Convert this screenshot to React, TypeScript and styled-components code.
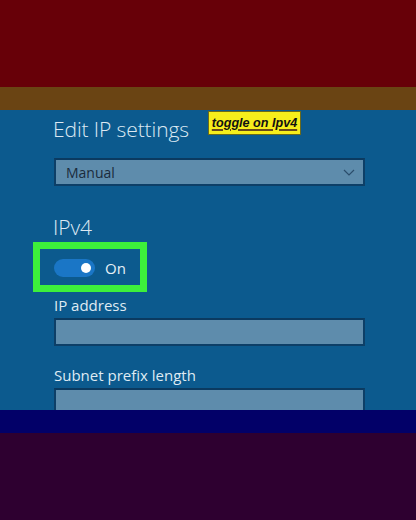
import React from "react";
import styled, { createGlobalStyle } from "styled-components";

const Global = createGlobalStyle`
  html, body { margin: 0; padding: 0; background: #2e0030; }
  body { font-family: "Open Sans", "Noto Sans", sans-serif; }
`;

const Page = styled.div`
  width: 416px;
  height: 520px;
  display: flex;
  flex-direction: column;
  overflow: hidden;
`;

const Band = styled.div<{ $h: number; $bg: string }>`
  height: ${(p) => p.$h}px;
  background: ${(p) => p.$bg};
  flex: none;
`;

const Panel = styled.section`
  position: relative;
  height: 300px;
  flex: none;
  background: #0c5a8e;
  padding: 5px 0 0 54px;
  box-sizing: border-box;
  overflow: hidden;
  display: flex;
  flex-direction: column;
  color: #e0ebf4;
`;

const Heading = styled.h2<{ $mt?: number }>`
  margin: ${(p) => p.$mt ?? 0}px 0 0 -1px;
  font-size: 21px;
  line-height: 28px;
  font-weight: 300;
  letter-spacing: -0.1px;
  color: #dde9f3;
`;

const Sticker = styled.div`
  position: absolute;
  left: 208px;
  top: 1px;
  width: 93px;
  height: 24px;
  box-sizing: border-box;
  background: #f6ee1b;
  border: 1px solid #6b6a1c;
  display: flex;
  align-items: center;
  justify-content: center;
  white-space: nowrap;
  font-family: "Liberation Sans", Arial, sans-serif;
  font-style: italic;
  font-weight: 700;
  font-size: 12.6px;
  color: #111;
  text-decoration: underline;
  text-decoration-color: #6a4a1a;
  text-decoration-thickness: 1.5px;
  text-underline-offset: 2px;
`;

const Field = styled.div<{ $mt: number }>`
  margin-top: ${(p) => p.$mt}px;
  width: 311px;
  height: 28px;
  box-sizing: border-box;
  background: #5e8cac;
  border: 2px solid #0d3f67;
  border-top-color: #0b3a60;
  display: flex;
  align-items: center;
  justify-content: space-between;
  padding: 0 8px 0 10px;
  flex: none;
`;

const FieldText = styled.span`
  font-size: 14px;
  color: #1a2b3c;
`;

const Label = styled.div<{ $mt: number }>`
  margin-top: ${(p) => p.$mt}px;
  font-size: 15px;
  line-height: 20px;
  color: #dfeaf3;
`;

const ToggleRow = styled.div`
  margin-top: 18px;
  height: 18px;
  display: flex;
  align-items: center;
  gap: 10px;
  flex: none;
`;

const Track = styled.div`
  width: 41px;
  height: 18px;
  border-radius: 9px;
  background: #1a76c6;
  position: relative;
  flex: none;
`;

const Knob = styled.div`
  position: absolute;
  right: 4px;
  top: 4px;
  width: 10px;
  height: 10px;
  border-radius: 50%;
  background: #fff;
`;

const ToggleText = styled.span`
  font-size: 15px;
  color: #e6f0f7;
`;

const Highlight = styled.div`
  position: absolute;
  left: 33px;
  top: 132px;
  width: 114px;
  height: 50px;
  box-sizing: border-box;
  border: 7px solid #3df03b;
`;

function Chevron() {
  return (
    <svg width="12" height="7" viewBox="0 0 12 7" fill="none">
      <path d="M1 1l5 5 5-5" stroke="#2b4d6b" strokeWidth="1.2" />
    </svg>
  );
}

export default function App() {
  return (
    <>
      <Global />
      <Page>
        <Band $h={87} $bg="#670008" />
        <Band $h={23} $bg="#6a4413" />
        <Panel>
          <Heading>Edit IP settings</Heading>
          <Sticker>toggle on Ipv4</Sticker>
          <Field $mt={15}>
            <FieldText>Manual</FieldText>
            <Chevron />
          </Field>
          <Heading $mt={27}>IPv4</Heading>
          <ToggleRow>
            <Track>
              <Knob />
            </Track>
            <ToggleText>On</ToggleText>
          </ToggleRow>
          <Highlight />
          <Label $mt={18}>IP address</Label>
          <Field $mt={3} />
          <Label $mt={19}>Subnet prefix length</Label>
          <Field $mt={3} />
        </Panel>
        <Band $h={23} $bg="#020068" />
        <Band $h={87} $bg="#2e0030" />
      </Page>
    </>
  );
}
